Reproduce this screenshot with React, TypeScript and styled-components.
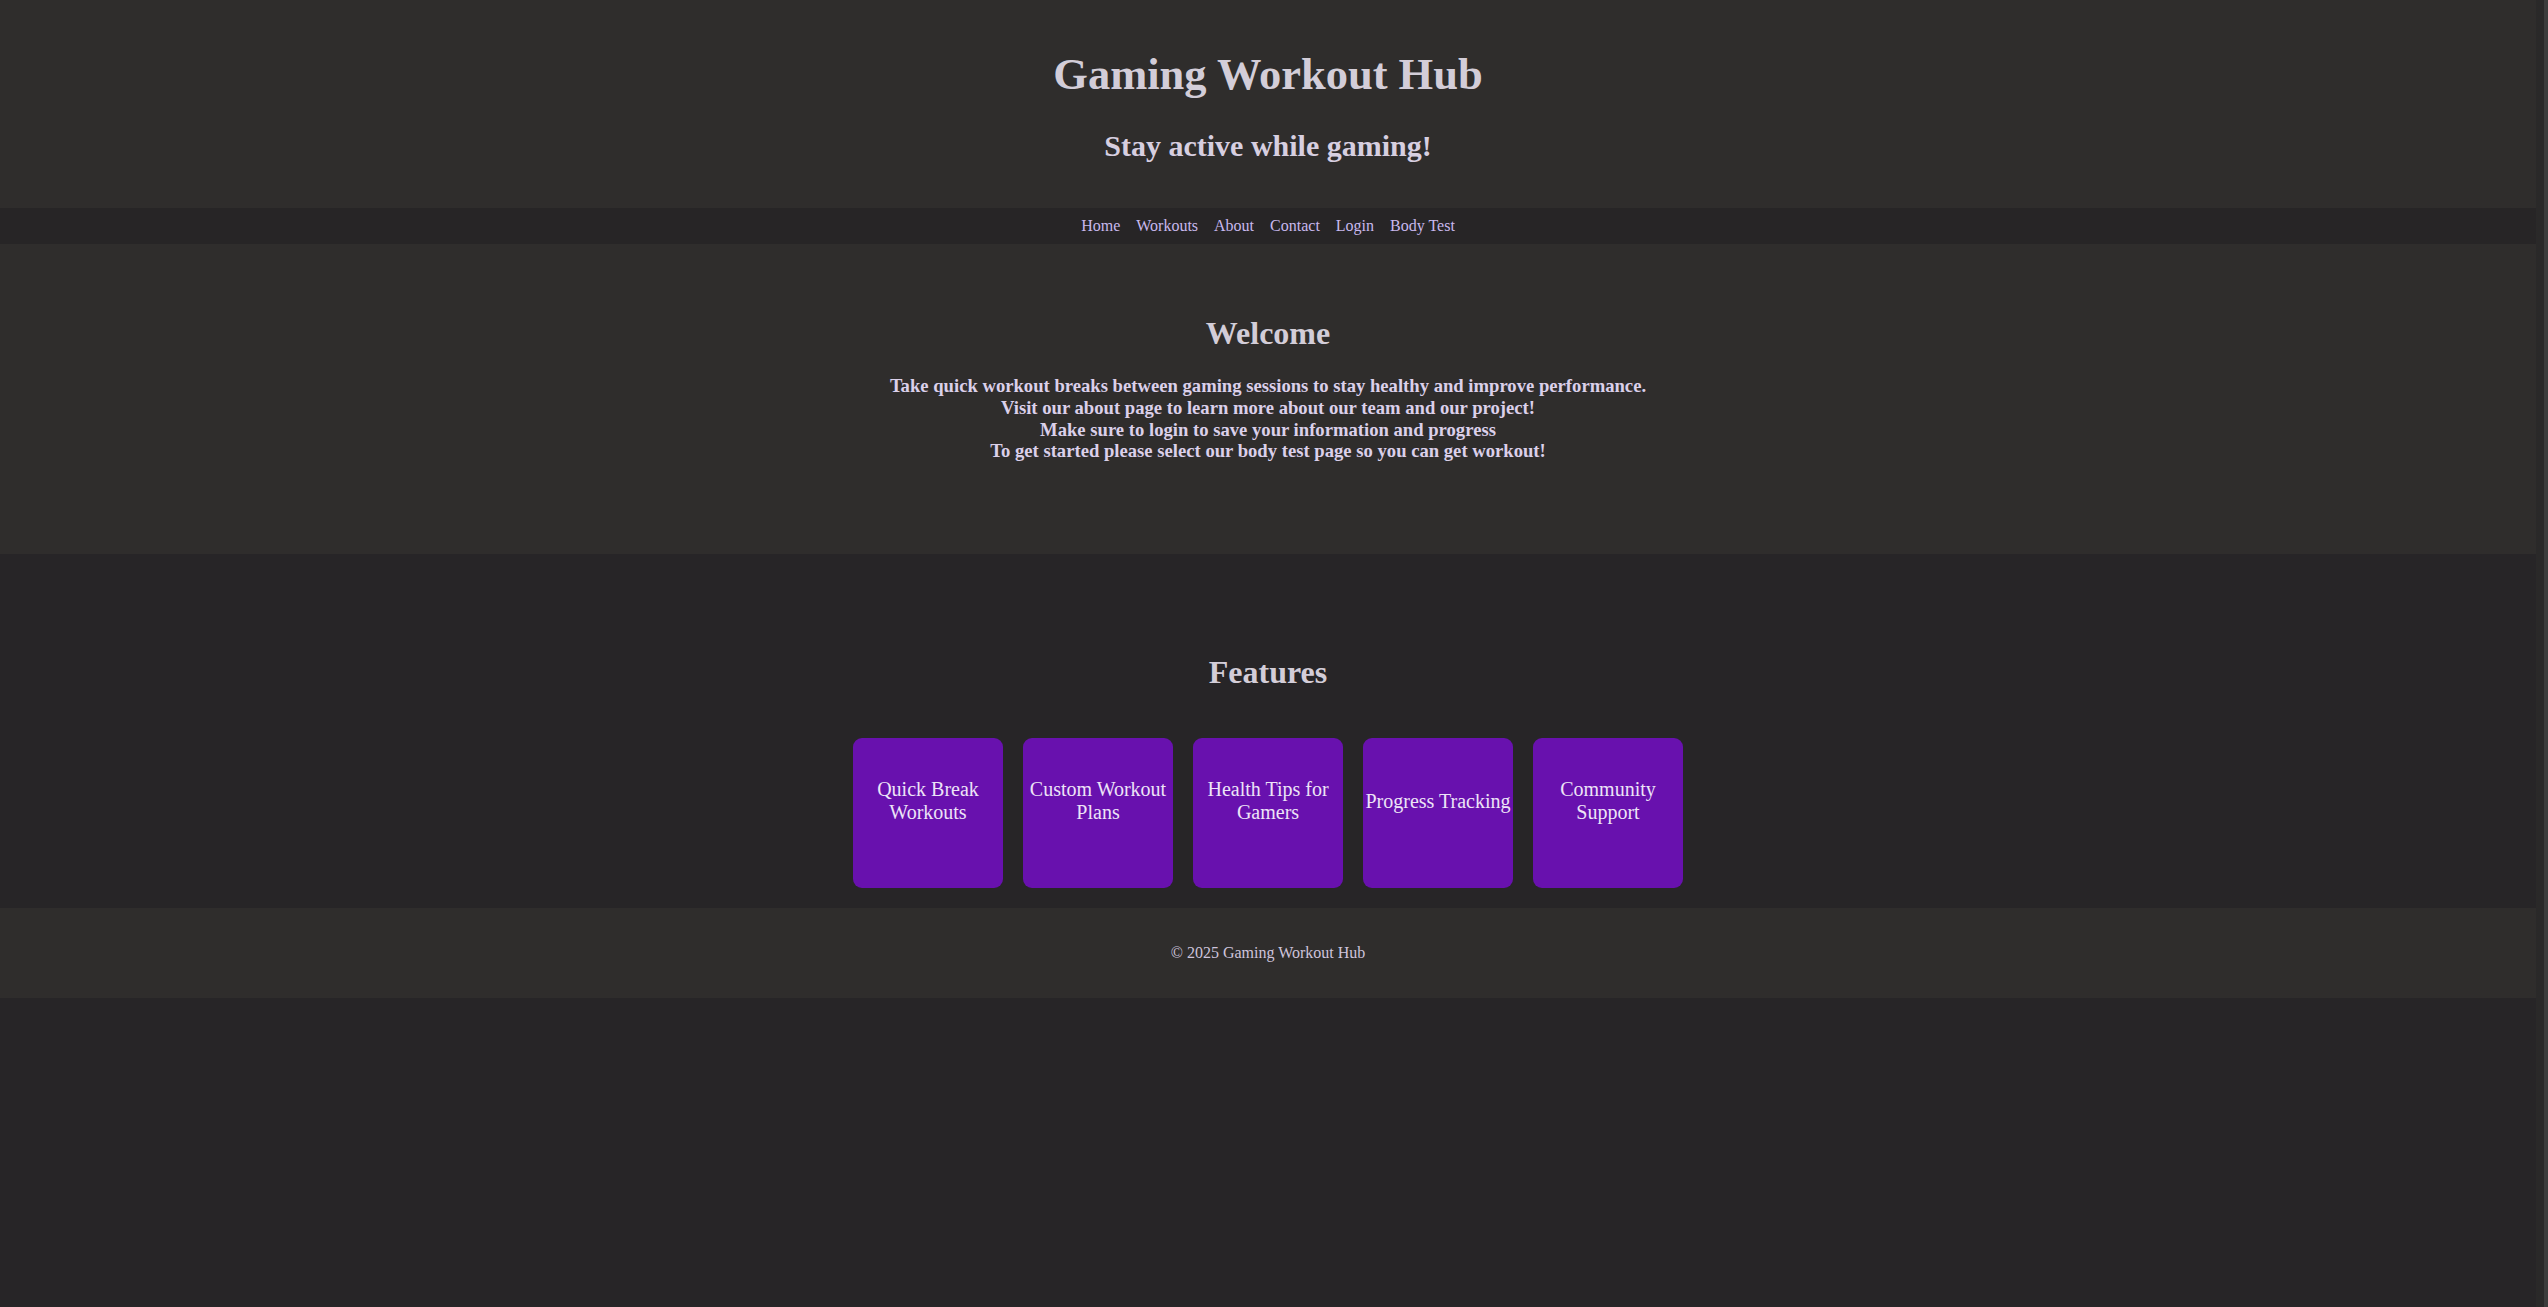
import React from "react";
import styled, { createGlobalStyle } from "styled-components";

const GlobalStyle = createGlobalStyle`
  html, body {
    margin: 0;
    padding: 0;
    background: #272527;
  }
  body {
    font-family: "Liberation Serif", "Times New Roman", serif;
    color: #d4cedb;
  }
  * {
    box-sizing: border-box;
  }
`;

const Shell = styled.div`
  display: flex;
  min-height: 100vh;
  background: #272527;
`;

const Page = styled.div`
  flex: 1;
  min-width: 0;
  display: flex;
  flex-direction: column;
`;

const Gutter = styled.div`
  width: 12px;
  flex-shrink: 0;
  background: #2a2929;
  border-right: 4px solid #3c3c3c;
`;

const Header = styled.header`
  background: #2f2d2c;
  text-align: center;
  padding: 48.5px 20px 45.5px;
`;

const Title = styled.h1`
  margin: 0 0 28px;
  font-size: 44.5px;
  line-height: 51px;
  font-weight: bold;
  color: #d3cdd8;
`;

const Tagline = styled.h2`
  margin: 0;
  font-size: 30px;
  line-height: 35px;
  font-weight: bold;
  color: #d7cfe0;
`;

const Nav = styled.nav`
  background: #272526;
  padding: 9px 0;
  display: flex;
  justify-content: center;
  gap: 16px;
`;

const NavLink = styled.a`
  font-size: 16px;
  line-height: 18px;
  color: #c9b9ee;
  text-decoration: none;
  cursor: pointer;
`;

const Section = styled.section<{ $tone: "light" | "dark"; $top: number; $bottom: number }>`
  background: ${(p) => (p.$tone === "light" ? "#2f2d2c" : "#272527")};
  padding: ${(p) => `${p.$top}px 20px ${p.$bottom}px`};
  text-align: center;
`;

const SectionTitle = styled.h2<{ $gap: number }>`
  margin: 0 0 ${(p) => p.$gap}px;
  font-size: 32px;
  line-height: 37px;
  font-weight: bold;
  color: #d3cdd8;
`;

const Lead = styled.p`
  margin: 0;
  font-size: 18.65px;
  line-height: 21.9px;
  font-weight: bold;
  color: #dbd0ea;
`;

const CardRow = styled.div`
  display: flex;
  justify-content: center;
  gap: 20px;
`;

const Card = styled.div`
  width: 150px;
  height: 150px;
  border-radius: 9px;
  background: #6811ae;
  color: #ede4f7;
  font-size: 20px;
  line-height: 22.7px;
  display: flex;
  align-items: center;
  justify-content: center;
  text-align: center;
  padding: 0 0 24px;
`;

const Footer = styled.footer`
  background: #2f2d2c;
  padding: 36px 20px;
  text-align: center;
  font-size: 16px;
  line-height: 18px;
  color: #cec4dc;
`;

const links = ["Home", "Workouts", "About", "Contact", "Login", "Body Test"];

const features = [
  "Quick Break Workouts",
  "Custom Workout Plans",
  "Health Tips for Gamers",
  "Progress Tracking",
  "Community Support",
];

export default function App() {
  return (
    <>
      <GlobalStyle />
      <Shell>
        <Page>
          <Header>
            <Title>Gaming Workout Hub</Title>
            <Tagline>Stay active while gaming!</Tagline>
          </Header>
          <Nav>
            {links.map((l) => (
              <NavLink key={l}>{l}</NavLink>
            ))}
          </Nav>
          <Section $tone="light" $top={71} $bottom={91.65}>
            <SectionTitle $gap={22.75}>Welcome</SectionTitle>
            <Lead>
              Take quick workout breaks between gaming sessions to stay healthy and improve performance.
              <br />
              Visit our about page to learn more about our team and our project!
              <br />
              Make sure to login to save your information and progress
              <br />
              To get started please select our body test page so you can get workout!
            </Lead>
          </Section>
          <Section $tone="dark" $top={100} $bottom={20}>
            <SectionTitle $gap={47}>Features</SectionTitle>
            <CardRow>
              {features.map((f) => (
                <Card key={f}>{f}</Card>
              ))}
            </CardRow>
          </Section>
          <Footer>© 2025 Gaming Workout Hub</Footer>
        </Page>
        <Gutter />
      </Shell>
    </>
  );
}
